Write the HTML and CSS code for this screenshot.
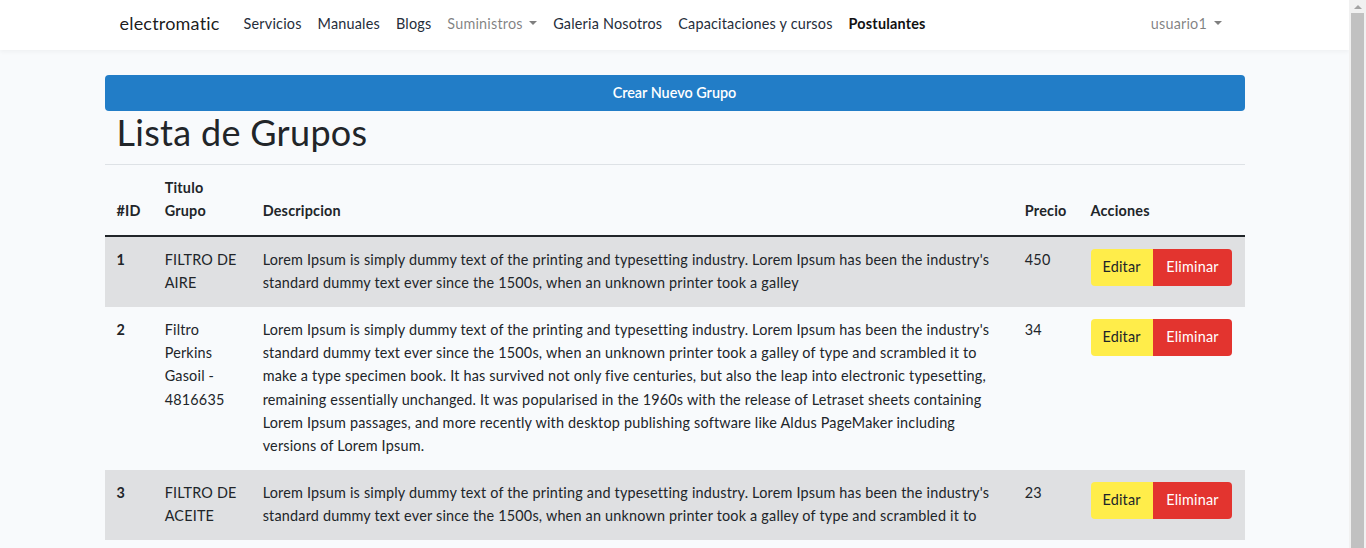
FILE: index.html
```html
<!DOCTYPE html>
<html lang="es">
<head>
<meta charset="utf-8">
<title>electromatic</title>
<link rel="stylesheet" href="styles.css">
</head>
<body>
<div class="viewport">
<nav class="navbar">
  <div class="nav-inner">
    <a class="brand" href="#">electromatic</a>
    <ul class="nav-links">
      <li><a href="#">Servicios</a></li>
      <li><a href="#">Manuales</a></li>
      <li><a href="#">Blogs</a></li>
      <li><a href="#" class="muted dropdown">Suministros</a></li>
      <li><a href="#">Galeria Nosotros</a></li>
      <li><a href="#">Capacitaciones y cursos</a></li>
      <li><a href="#" class="strong">Postulantes</a></li>
    </ul>
    <ul class="nav-links nav-right">
      <li><a href="#" class="muted dropdown">usuario1</a></li>
    </ul>
  </div>
</nav>
<main class="page">
  <a href="#" class="btn-create">Crear Nuevo Grupo</a>
  <h1 class="title">Lista de Grupos</h1>
  <table class="table">
    <thead>
      <tr>
        <th class="c-id">#ID</th>
        <th class="c-title">Titulo Grupo</th>
        <th class="c-desc">Descripcion</th>
        <th class="c-price">Precio</th>
        <th class="c-act">Acciones</th>
      </tr>
    </thead>
    <tbody>
      <tr class="shade">
        <th>1</th>
        <td>FILTRO DE AIRE</td>
        <td>Lorem Ipsum is simply dummy text of the printing and typesetting industry. Lorem Ipsum has been the industry's standard dummy text ever since the 1500s, when an unknown printer took a galley</td>
        <td>450</td>
        <td><div class="btn-group"><a href="#" class="btn btn-edit">Editar</a><a href="#" class="btn btn-del">Eliminar</a></div></td>
      </tr>
      <tr>
        <th>2</th>
        <td>Filtro Perkins Gasoil - 4816635</td>
        <td>Lorem Ipsum is simply dummy text of the printing and typesetting industry. Lorem Ipsum has been the industry's standard dummy text ever since the 1500s, when an unknown printer took a galley of type and scrambled it to make a type specimen book. It has survived not only five centuries, but also the leap into electronic typesetting, remaining essentially unchanged. It was popularised in the 1960s with the release of Letraset sheets containing Lorem Ipsum passages, and more recently with desktop publishing software like Aldus PageMaker including versions of Lorem Ipsum.</td>
        <td>34</td>
        <td><div class="btn-group"><a href="#" class="btn btn-edit">Editar</a><a href="#" class="btn btn-del">Eliminar</a></div></td>
      </tr>
      <tr class="shade">
        <th>3</th>
        <td>FILTRO DE ACEITE</td>
        <td>Lorem Ipsum is simply dummy text of the printing and typesetting industry. Lorem Ipsum has been the industry's standard dummy text ever since the 1500s, when an unknown printer took a galley of type and scrambled it to</td>
        <td>23</td>
        <td><div class="btn-group"><a href="#" class="btn btn-edit">Editar</a><a href="#" class="btn btn-del">Eliminar</a></div></td>
      </tr>
    </tbody>
  </table>
</main>
</div>
<div class="scrollbar" aria-hidden="true">
  <div class="sb-arrow"></div>
  <div class="sb-thumb"></div>
</div>
</body>
</html>
```

FILE: styles.css
```css
* { box-sizing: border-box; }
html, body { margin: 0; padding: 0; }
body {
  background: #f8fafc;
  color: #212529;
  font-family: Lato, "Liberation Sans", sans-serif;
  font-size: 14.4px;
  line-height: 1.6;
  letter-spacing: 0.2px;
}
a { text-decoration: none; color: inherit; }

.viewport { width: 1349px; }

.scrollbar {
  position: fixed;
  top: 0;
  right: 0;
  width: 17px;
  height: 100%;
  background: #f1f1f1;
  display: flex;
  flex-direction: column;
  align-items: center;
}
.sb-arrow {
  margin-top: 5px;
  width: 0;
  height: 0;
  border-left: 4px solid transparent;
  border-right: 4px solid transparent;
  border-bottom: 4px solid #a3a3a3;
}
.sb-thumb {
  margin-top: 4px;
  width: 13px;
  flex: 1;
  background: #c1c1c1;
}

.navbar {
  background: #fff;
  height: 50px;
  box-shadow: 0 2px 4px rgba(0,0,0,.04);
}
.nav-inner {
  max-width: 1140px;
  margin: 0 auto;
  padding: 0 15px 3px;
  height: 50px;
  display: flex;
  align-items: center;
}
.brand {
  font-size: 18px;
  color: rgba(0,0,0,.9);
  margin-right: 16px;
  padding: 5px 0;
}
.nav-links {
  list-style: none;
  margin: 0;
  padding: 0;
  display: flex;
}
.nav-links a {
  display: block;
  padding: 8px;
  color: #252d3a;
}
.nav-links a.muted { color: rgba(0,0,0,.5); }
.nav-links a.strong { color: #111; font-weight: 700; }
.nav-right { margin-left: auto; }
.dropdown::after {
  content: "";
  display: inline-block;
  margin-left: .45em;
  vertical-align: .255em;
  border-top: .3em solid;
  border-right: .3em solid transparent;
  border-left: .3em solid transparent;
}

.page {
  max-width: 1140px;
  margin: 0 auto;
  padding: 25px 0 24px;
}
.btn-create {
  display: block;
  text-align: center;
  background: #227dc7;
  color: #fff;
  border-radius: 4px;
  padding: 6px 12px;
  height: 36px;
  font-weight: 600;
  letter-spacing: 0;
  line-height: 24px;
}
.title {
  margin: 0;
  padding: 0 12px 10px;
  font-size: 36px;
  font-weight: 400;
  line-height: 1.2;
  letter-spacing: 0.3px;
  border-bottom: 1px solid #dee2e6;
}

.table {
  width: 100%;
  border-collapse: collapse;
}
.table th, .table td {
  padding: 11px 12px 13px;
  vertical-align: top;
  text-align: left;
}
.table thead th {
  vertical-align: bottom;
  font-weight: 700;
  border-bottom: 2px solid #212529;
}
.table tbody th { font-weight: 700; }
.c-id { width: 48px; }
.c-title { width: 98px; }
.c-price { width: 64px; }
.c-act { width: 166px; }
.table tr.shade { background: #dfe0e2; }

.btn-group { display: flex; margin-top: 1px; }
.btn {
  display: block;
  padding: 6px 12px;
  line-height: 23px;
  height: 37px;
}
.btn-edit {
  background: #ffed4a;
  color: #212529;
  border-radius: 4px 0 0 4px;
}
.btn-del {
  background: #e3342f;
  color: #fff;
  padding: 6px 13.5px;
  border-radius: 0 4px 4px 0;
}
```
